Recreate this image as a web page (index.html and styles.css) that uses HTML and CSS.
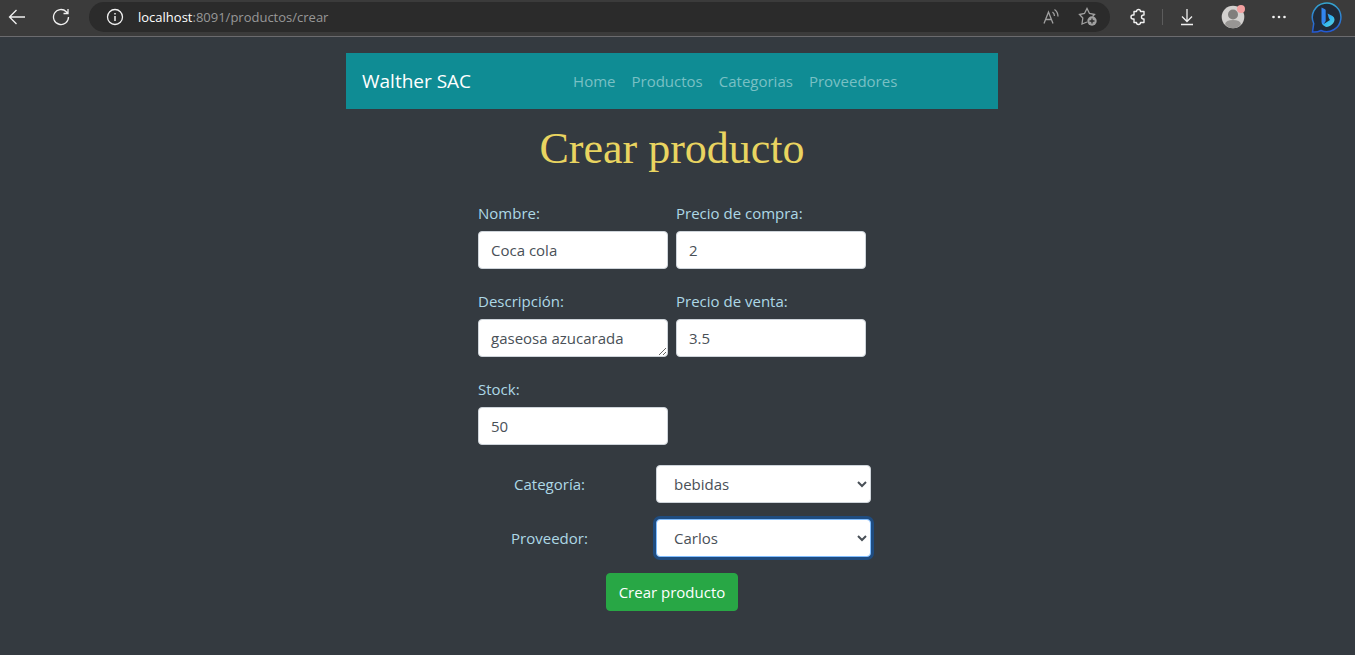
FILE: index.html
```html
<!DOCTYPE html>
<html lang="es">
<head>
<meta charset="utf-8">
<meta name="viewport" content="width=device-width, initial-scale=1">
<title>Crear producto</title>
<link rel="stylesheet" href="styles.css">
</head>
<body>
<header class="toolbar">
  <button class="tool" type="button" aria-label="Atrás"><svg width="18" height="18" viewBox="0 0 18 18"><path d="M17 9H1.500M8.500 2 1.500 9l7 7"/></svg></button>
  <button class="tool tool-reload" type="button" aria-label="Actualizar"><svg width="18" height="18" viewBox="0 0 18 18"><path d="M16.500 9A7.500 7.500 0 1 1 14.300 3.700L16 5.500M16 1v4.500h-4.500"/></svg></button>
  <div class="address">
    <svg class="info" width="18" height="18" viewBox="0 0 18 18"><circle cx="9" cy="9" r="7.500"/><path d="M9 8v5M9 5v1.500" stroke-width="1.500"/></svg>
    <span class="url"><span class="host">localhost</span>:8091/productos/crear</span>
    <button class="tool dim" type="button" aria-label="Leer en voz alta"><svg width="18" height="18" viewBox="0 0 18 18"><path d="M2 15.500 6.500 4 11 15.500M3.500 11.500h6M10.500 4q2 1.500 2 4M12.500 1.500q3.500 2.500 3.500 7"/></svg></button>
    <button class="tool dim tool-star" type="button" aria-label="Agregar a favoritos"><svg width="20" height="20" viewBox="0 0 20 20"><path d="M9 15 4 17l.8-6L1.500 7.500 6.500 6.500 9 1.500l2.500 5 5 1-2 2"/><circle cx="14" cy="14" r="4.700" fill="#a0a0a0" stroke="none"/><path d="M14 11.500v5M11.500 14h5" stroke="#2b2b2b"/></svg></button>
  </div>
  <button class="tool tool-extension" type="button" aria-label="Extensiones"><svg width="18" height="18" viewBox="0 0 18 18"><path d="M5 3.500h2.500a2 2 0 0 1 4 0H15V7h-.5a2 2 0 0 0 0 4h.5v3.500h-3.500a2 2 0 0 1-4 0H5V11H4a2 2 0 0 1 0-4h1z" stroke-width="1.400" stroke-linejoin="round"/></svg></button>
  <span class="divider"></span>
  <button class="tool tool-download" type="button" aria-label="Descargas"><svg width="18" height="18" viewBox="0 0 18 18"><path d="M9 1v12M4 8.500l5 5 5-5M3 16.500h12"/></svg></button>
  <button class="tool tool-profile" type="button" aria-label="Perfil"><svg width="26" height="26" viewBox="0 0 26 26"><g stroke="none"><circle cx="12" cy="13" r="11.300" fill="#d2d0ce"/><circle cx="12" cy="10.500" r="5" fill="#807e7c"/><path d="M4 20q1-4 8-4t8 4q-3 4.300-8 4.300T4 20" fill="#979593"/><circle cx="20" cy="5" r="4" fill="#f3a0a0"/></g></svg></button>
  <button class="tool tool-more" type="button" aria-label="Más"><svg width="18" height="18" viewBox="0 0 18 18"><g fill="#f4f4f4" stroke="none"><circle cx="3.500" cy="9" r="1.300"/><circle cx="9" cy="9" r="1.300"/><circle cx="14.500" cy="9" r="1.300"/></g></svg></button>
  <button class="tool tool-bing" type="button" aria-label="Bing"><svg width="32" height="32" viewBox="0 0 32 32">
    <defs><linearGradient id="ring" x2="0" y2="1"><stop stop-color="#35a5cf"/><stop offset="1" stop-color="#2458d3"/></linearGradient><linearGradient id="mark" x2="1" y2="1"><stop stop-color="#3275ee"/><stop offset=".5" stop-color="#2fb5f3"/><stop offset="1" stop-color="#63d7d5"/></linearGradient></defs>
    <path d="M1.500 31 2.700 22.500A14.300 14.300 0 1 1 10 29.500Q6 31.500 1.500 31z" fill="#202a38" stroke="url(#ring)" stroke-width="1.500"/>
    <path d="M10.500 6.500 14 8.300q.7.400.7 1.200V20l-2.400 3.800q-1.800-.6-1.800-3z" fill="#3285ef" stroke="none"/>
    <path d="m16.500 12.500 5 2.500q2 1.200 2 3.500c0 4-5 8-9 7.300q-3-.8-3.800-4l2 1.200 6.300-4-1.200-2z" fill="url(#mark)" stroke="none"/>
  </svg></button>
</header>
<main class="page">
  <nav class="navbar">
    <a class="brand" href="#">Walther SAC</a>
    <div class="links">
      <a href="#">Home</a><a href="#">Productos</a><a href="#">Categorias</a><a href="#">Proveedores</a>
    </div>
  </nav>
  <h1>Crear producto</h1>
  <form class="product-form">
    <div class="fields">
      <div class="field"><label for="nombre">Nombre:</label><input class="control" id="nombre" type="text" value="Coca cola"></div>
      <div class="field"><label for="compra">Precio de compra:</label><input class="control" id="compra" type="text" value="2"></div>
      <div class="field"><label for="descripcion">Descripción:</label><textarea class="control" id="descripcion" rows="1">gaseosa azucarada</textarea></div>
      <div class="field"><label for="venta">Precio de venta:</label><input class="control" id="venta" type="text" value="3.5"></div>
      <div class="field"><label for="stock">Stock:</label><input class="control" id="stock" type="text" value="50"></div>
    </div>
    <div class="choices">
      <label for="categoria">Categoría:</label>
      <select class="control" id="categoria"><option>bebidas</option></select>
      <label for="proveedor">Proveedor:</label>
      <select class="control active" id="proveedor"><option>Carlos</option></select>
    </div>
    <button class="submit" type="button">Crear producto</button>
  </form>
</main>
</body>
</html>
```
FILE: styles.css
```css
* { box-sizing: border-box; }
body {
  margin: 0;
  min-height: 100vh;
  background: #343a40;
  color: #add8e6;
  font: 15px/24px "Segoe UI", "Open Sans", sans-serif;
}
a { text-decoration: none; }
input, textarea, select, button { font: inherit; }

.toolbar {
  display: flex;
  align-items: center;
  height: 37px;
  padding: 0 12px 3px 8px;
  background: #3b3b3b;
  border-bottom: 1px solid #6b6b6e;
}
.tool {
  display: flex;
  flex: none;
  padding: 0;
  border: 0;
  background: none;
}
.toolbar svg {
  flex: none;
  fill: none;
  stroke: #f0f0f0;
  stroke-width: 1.3;
}
.toolbar .dim svg { stroke: #a0a0a0; }
.tool-reload { margin-left: 26px; }
.address {
  display: flex;
  flex: 1;
  align-items: center;
  height: 30px;
  margin-left: 19px;
  padding: 0 12px 0 17px;
  border-radius: 15px;
  background: #2b2b2b;
}
.url {
  flex: 1;
  margin-left: 14px;
  color: #989898;
  font-size: 13px;
}
.host { color: #fff; }
.tool-star { margin-left: 18px; }
.tool-extension { margin-left: 19px; }
.divider {
  width: 1px;
  height: 16px;
  margin-left: 15px;
  background: #5c5c5c;
}
.tool-download { margin-left: 15px; }
.tool-profile { margin-left: 25px; }
.tool-more { margin-left: 23px; }
.tool-bing { margin-left: 23px; }

.page {
  display: flex;
  flex-direction: column;
  align-items: center;
  padding: 16px 11px 40px 0;
}
.navbar {
  display: flex;
  align-items: center;
  width: 100%;
  max-width: 652px;
  min-height: 56px;
  padding: 8px 16px;
  background: #0f8c94;
}
.brand {
  color: #fff;
  font-size: 19px;
}
.links {
  display: flex;
  gap: 16px;
  margin-left: 102px;
}
.links a { color: #79c0c4; }
h1 {
  margin: 16px 0 28px;
  color: #e9d460;
  font: 400 44px/48px Georgia, "Liberation Serif", serif;
}
.product-form {
  display: flex;
  flex-direction: column;
  align-items: center;
  gap: 16px;
}
.fields {
  display: grid;
  grid-template-columns: 190px 190px;
  gap: 20px 8px;
  padding-bottom: 4px;
}
.field {
  display: flex;
  flex-direction: column;
  gap: 6px;
}
.control {
  width: 100%;
  height: 38px;
  padding: 6px 12px;
  border: 1px solid #ced4da;
  border-radius: 4px;
  outline: 0;
  background: #fff;
  color: #495057;
}
textarea.control {
  display: block;
  overflow: hidden;
  resize: vertical;
}
.choices {
  display: grid;
  grid-template-columns: 153px 215px;
  gap: 16px 30px;
  align-items: center;
  text-align: center;
}
select.control { padding: 6px 0 6px 13px; }
.control.active {
  border-color: #80bdff;
  box-shadow: 0 0 0 3px #1f4c80;
}
.submit {
  height: 38px;
  padding: 6px 12px;
  border: 1px solid #28a745;
  border-radius: 4px;
  background: #28a745;
  color: #fff;
}
```
